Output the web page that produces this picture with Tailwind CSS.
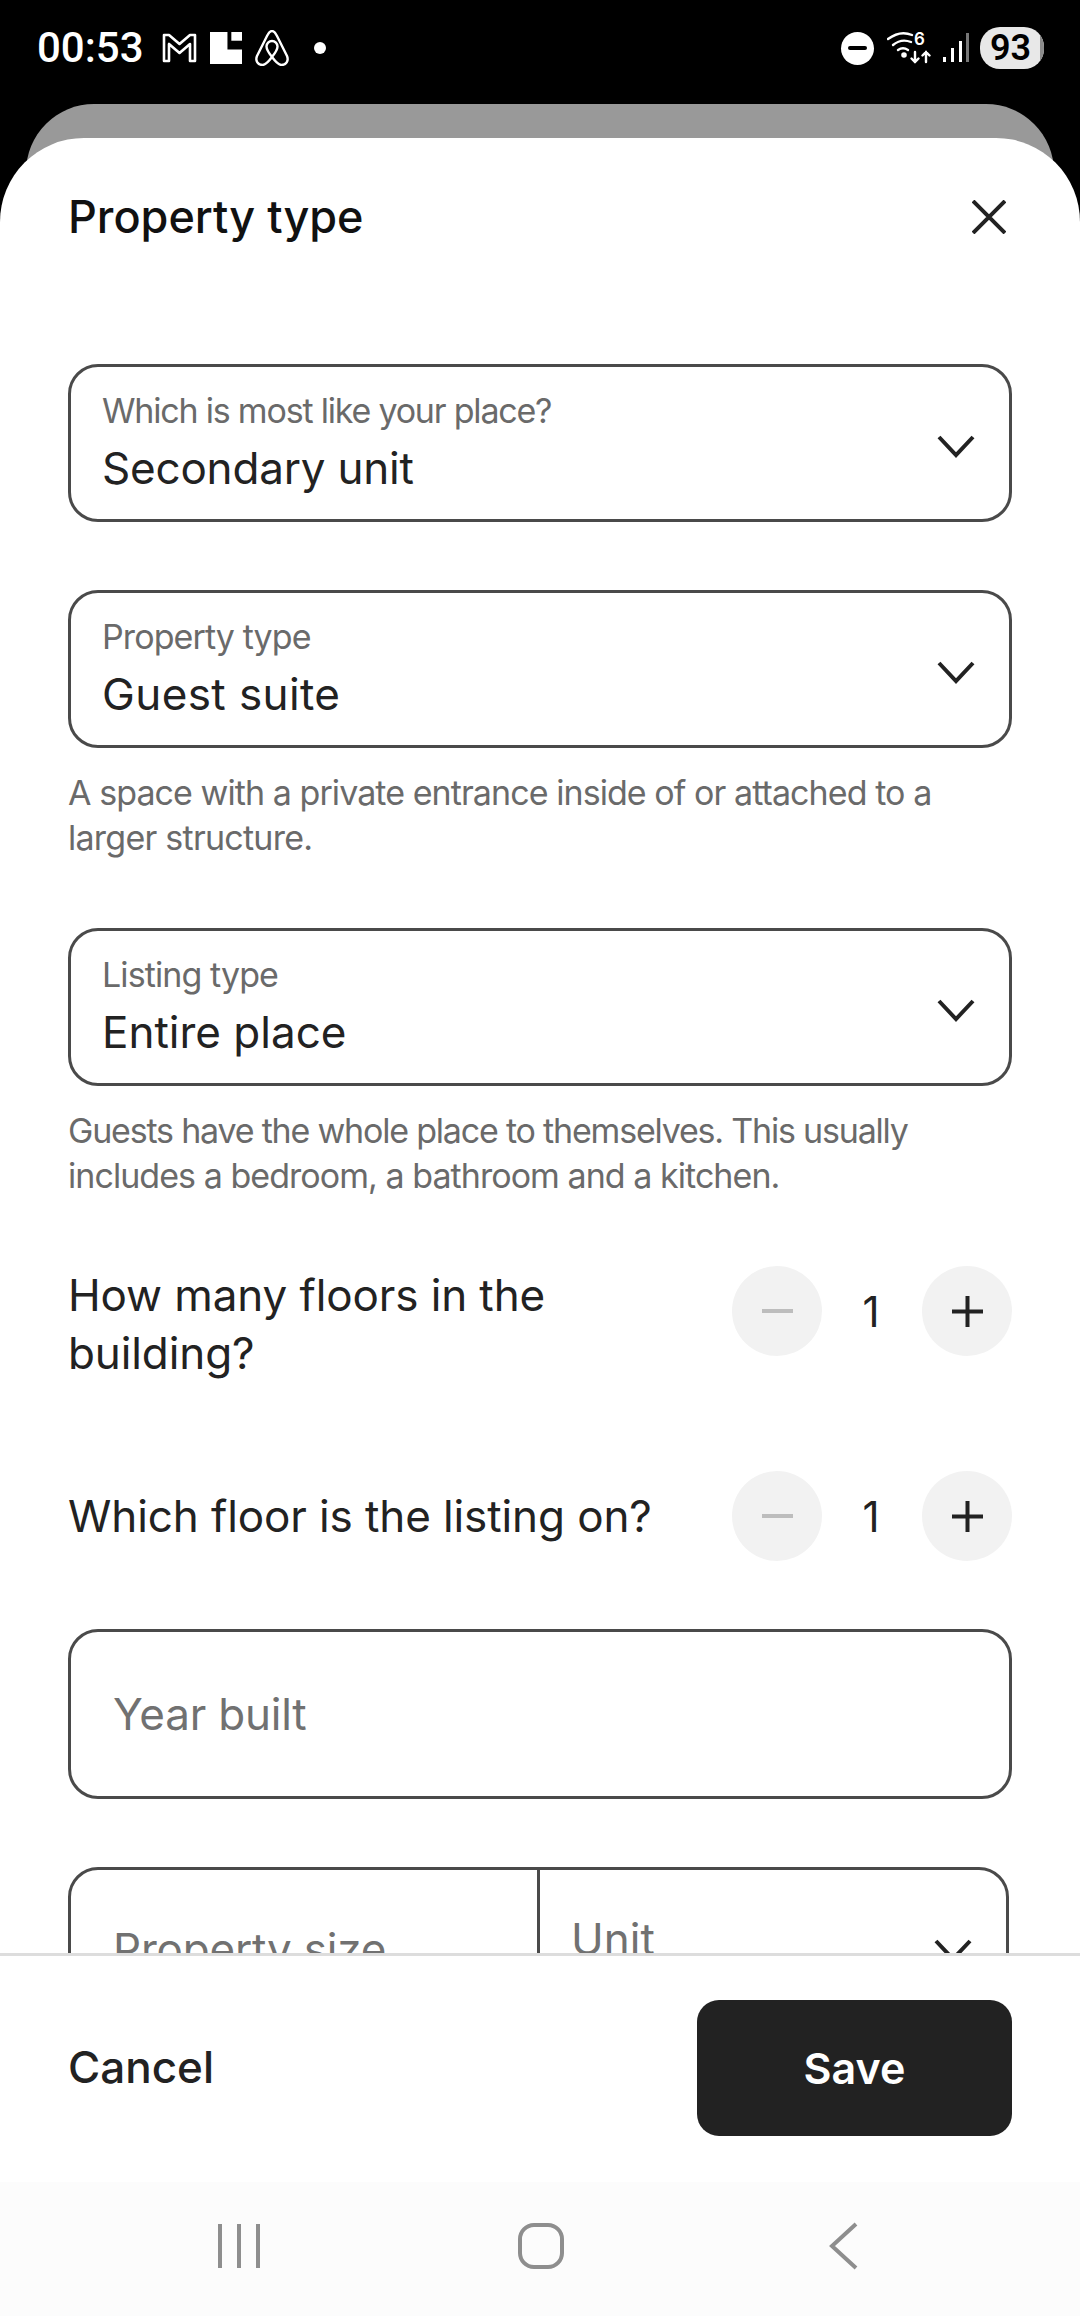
<!DOCTYPE html>
<html lang="en">
<head>
<meta charset="UTF-8">
<meta name="viewport" content="width=device-width, initial-scale=1.0">
<title>Property type</title>
<script src="https://cdn.jsdelivr.net/npm/@tailwindcss/browser@4"></script>
</head>
<body class="bg-black font-['Inter',sans-serif]">
<div class="w-[1080px] h-[2316px] flex flex-col overflow-hidden bg-black">

  <!-- status bar -->
  <div class="relative h-[104px] shrink-0 flex items-start justify-between pl-[37px] pr-[36px] pt-[26px] text-white">
    <div class="flex items-center h-[44px]">
      <span class="w-[106px] text-[42px] font-medium font-['Roboto',sans-serif] leading-[44px]">00:53</span>
      <svg class="ml-[19px]" width="35" height="30" viewBox="0 0 35 30" fill="none" stroke="white" stroke-width="2.6" stroke-linejoin="round"><path d="M2 2h5l10.500 9 10.500-9h5v26h-5V11l-10.500 9L7 11v17H2z"/></svg>
      <svg class="ml-[13px]" width="32" height="32" viewBox="0 0 33 33" fill="white"><path d="M0 0h18v18h15v15H0z"/><path d="M22 0h11v9H22z"/></svg>
      <svg class="ml-[13px]" width="34" height="36" viewBox="0 0 34 36" fill="none" stroke="white" stroke-width="2.4" stroke-linejoin="round"><path d="M17 27C13 22 11.500 19 11.500 16.500A5.500 5.500 0 0 1 22.500 16.500C22.500 19 21 22 17 27C14 31 11 35 7.500 35C3 35 0 31 2 26L12 6C14 2 15 1 17 1C19 1 20 2 22 6L32 26C34 31 31 35 26.500 35C23 35 20 31 17 27Z"/></svg>
      <span class="ml-[25px] w-[12px] h-[12px] rounded-full bg-white"></span>
    </div>
    <div class="flex items-center h-[44px]">
      <span class="w-[33px] h-[33px] rounded-full bg-white flex items-center justify-center"><span class="w-[19px] h-[4px] bg-black rounded-full"></span></span>
      <svg class="ml-[13px]" width="44" height="34" viewBox="0 0 44 34" fill="none" stroke="white" stroke-width="2.4" stroke-linecap="round"><path d="M1 8c8-6 17-7 24-4"/><path d="M6 14c6-5 13-5 18-3"/><path d="M11 19c3-2 7-2 10 0"/><circle cx="17" cy="24" r="1.6" fill="white"/><path d="M28 21v10m-3.500-3.500 3.500 3.500 3.500-3.500"/><path d="M39 31V21m-3.500 3.500 3.500-3.500 3.500 3.500"/></svg>
      <span class="absolute left-[914px] top-[29px] text-[17px] font-semibold leading-[20px] text-white">6</span>
      <svg class="ml-[10px]" width="28" height="30" viewBox="0 0 28 30"><path d="M2 24h3v5H2zM10 15h3v14h-3zM18 8h3v21h-3z" fill="white"/><path d="M25 0h3v29h-3z" fill="#777"/></svg>
      <span class="relative ml-[11px] w-[64px] h-[42px] rounded-[20px] overflow-hidden bg-[#e8e8e8] flex items-center justify-center text-black text-[36px] font-semibold font-['Roboto',sans-serif] leading-none pr-[3px]">93<span class="absolute right-0 top-0 h-full w-[4px] bg-[#8a8a8a]"></span></span>
    </div>
  </div>

  <!-- sheet behind -->
  <div class="mx-[26px] h-[110px] mb-[-76px] shrink-0 rounded-t-[68px] bg-[#999999]"></div>

  <!-- sheet -->
  <div class="relative flex-1 min-h-0 bg-white rounded-t-[84px] flex flex-col">
    <div class="flex items-center justify-between px-[68px] h-[158px] shrink-0">
      <h1 class="text-[45px] font-medium text-[#111] leading-[58px]">Property type</h1>
      <svg class="mr-[6px]" width="34" height="34" viewBox="0 0 34 34" fill="none" stroke="#222" stroke-width="4"><path d="M1 1l32 32M33 1L1 33"/></svg>
    </div>

    <div class="flex-1 min-h-0 overflow-hidden px-[68px] pt-[68px] flex flex-col">
      <div class="h-[158px] shrink-0 border-[3px] border-[#4a4a4a] rounded-[30px] flex items-center justify-between pl-[31px] pr-[34px]">
        <div class="pt-[1px]">
          <div class="text-[34px] leading-[42px] text-[#6a6a6a] tracking-[-1.2px]">Which is most like your place?</div>
          <div class="text-[44px] leading-[58px] text-[#222] mt-[7px] tracking-[-0.2px]">Secondary unit</div>
        </div>
        <svg class="mt-[5px]" width="38" height="24" viewBox="0 0 38 24" fill="none" stroke="#222" stroke-width="4"><path d="M2 3l17 18L36 3"/></svg>
      </div>

      <div class="h-[158px] shrink-0 mt-[68px] border-[3px] border-[#4a4a4a] rounded-[30px] flex items-center justify-between pl-[31px] pr-[34px]">
        <div class="pt-[1px]">
          <div class="text-[34px] leading-[42px] text-[#6a6a6a] tracking-[-0.9px]">Property type</div>
          <div class="text-[44px] leading-[58px] text-[#222] mt-[7px] tracking-[0.4px]">Guest suite</div>
        </div>
        <svg class="mt-[5px]" width="38" height="24" viewBox="0 0 38 24" fill="none" stroke="#222" stroke-width="4"><path d="M2 3l17 18L36 3"/></svg>
      </div>
      <p class="mt-[22px] text-[34px] leading-[45px] text-[#6a6a6a] tracking-[-0.93px]">A space with a private entrance inside of or attached to a<br><span class="tracking-[-0.75px]">larger structure.</span></p>

      <div class="h-[158px] shrink-0 mt-[68px] border-[3px] border-[#4a4a4a] rounded-[30px] flex items-center justify-between pl-[31px] pr-[34px]">
        <div class="pt-[1px]">
          <div class="text-[34px] leading-[42px] text-[#6a6a6a] tracking-[-0.9px]">Listing type</div>
          <div class="text-[44px] leading-[58px] text-[#222] mt-[7px]">Entire place</div>
        </div>
        <svg class="mt-[5px]" width="38" height="24" viewBox="0 0 38 24" fill="none" stroke="#222" stroke-width="4"><path d="M2 3l17 18L36 3"/></svg>
      </div>
      <p class="mt-[22px] text-[34px] leading-[45px] text-[#6a6a6a] tracking-[-1.2px]">Guests have the whole place to themselves. This usually<br><span class="tracking-[-0.95px]">includes a bedroom, a bathroom and a kitchen.</span></p>

      <div class="mt-[68px] flex items-start justify-between shrink-0">
        <div class="text-[44px] leading-[58px] text-[#222] tracking-[-0.1px]">How many floors in the<br>building?</div>
        <div class="flex items-center">
          <span class="w-[90px] h-[90px] rounded-full bg-[#f2f2f2] flex items-center justify-center"><span class="w-[31px] h-[4px] bg-[#bdbdbd]"></span></span>
          <span class="w-[100px] pr-[2px] text-center text-[42px] text-[#222]">1</span>
          <span class="w-[90px] h-[90px] rounded-full bg-[#f2f2f2] flex items-center justify-center"><svg width="31" height="31" viewBox="0 0 31 31" stroke="#222" stroke-width="4"><path d="M15.500 0v31M0 15.500h31"/></svg></span>
        </div>
      </div>

      <div class="mt-[89px] flex items-center justify-between shrink-0">
        <div class="text-[44px] leading-[58px] text-[#222] tracking-[-0.1px]">Which floor is the listing on?</div>
        <div class="flex items-center">
          <span class="w-[90px] h-[90px] rounded-full bg-[#f2f2f2] flex items-center justify-center"><span class="w-[31px] h-[4px] bg-[#bdbdbd]"></span></span>
          <span class="w-[100px] pr-[2px] text-center text-[42px] text-[#222]">1</span>
          <span class="w-[90px] h-[90px] rounded-full bg-[#f2f2f2] flex items-center justify-center"><svg width="31" height="31" viewBox="0 0 31 31" stroke="#222" stroke-width="4"><path d="M15.500 0v31M0 15.500h31"/></svg></span>
        </div>
      </div>

      <div class="h-[170px] shrink-0 mt-[68px] border-[3px] border-[#4a4a4a] rounded-[30px] flex items-center pl-[42px] text-[44px] text-[#717171] tracking-[-0.2px]">Year built</div>

      <div class="h-[170px] shrink-0 mt-[68px] w-[941px] border-[3px] border-[#4a4a4a] rounded-[30px] flex">
        <div class="w-[469px] border-r-[3px] border-[#4a4a4a] pl-[42px] pt-[50px] text-[44px] leading-[58px] text-[#717171] tracking-[-0.2px]">Property size</div>
        <div class="flex-1 pl-[31px] pr-[34px] pt-[40px] flex justify-between text-[44px] leading-[58px] text-[#717171]">
          <span>Unit</span>
          <svg class="mt-[28px]" width="38" height="24" viewBox="0 0 38 24" fill="none" stroke="#222" stroke-width="4"><path d="M2 3l17 18L36 3"/></svg>
        </div>
      </div>
    </div>

    <!-- footer -->
    <div class="shrink-0 h-[229px] border-t-[3px] border-[#dddddd] bg-white flex items-start justify-between px-[68px] pt-[44px]">
      <span class="mt-[39px] text-[44px] font-medium leading-[56px] text-[#222]">Cancel</span>
      <button class="w-[315px] h-[136px] rounded-[22px] bg-[#222222] text-white text-[43px] font-semibold">Save</button>
    </div>

    <!-- nav bar -->
    <div class="shrink-0 h-[134px] bg-[#fcfcfc] flex items-center justify-center relative">
      <div class="flex items-center justify-between w-[644px] pb-[6px] pr-[2px]">
        <svg width="42" height="44" viewBox="0 0 42 44" stroke="#8e8e8e" stroke-width="4"><path d="M2 0v44M21 0v44M40 0v44"/></svg>
        <svg class="mr-[6px]" width="46" height="46" viewBox="0 0 46 46" fill="none" stroke="#8e8e8e" stroke-width="4"><rect x="2" y="2" width="42" height="42" rx="14"/></svg>
        <svg width="32" height="48" viewBox="0 0 32 48" fill="none" stroke="#8e8e8e" stroke-width="4"><path d="M28 2L4 24l24 22"/></svg>
      </div>
    </div>
  </div>
</div>
</body>
</html>
